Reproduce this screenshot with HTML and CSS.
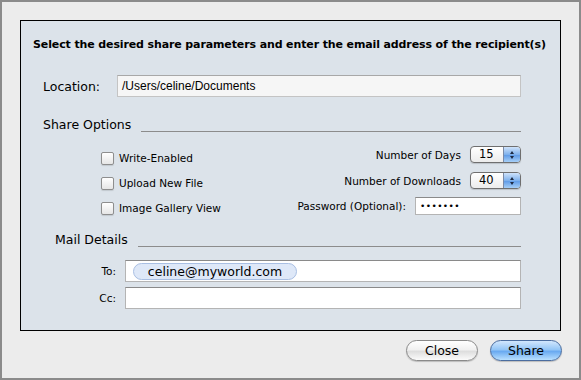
FILE: index.html
```html
<!DOCTYPE html>
<html lang="en">
  <head>
    <meta charset="UTF-8" />
    <title>Share</title>
    <link rel="stylesheet" href="styles.css">
  </head>
  <body>
    <div class="window">
      <div class="panel">
        <h1 class="title">Select the desired share parameters and enter the email address of the recipient(s)</h1>

        <div class="location-row">
          <label class="location-label" for="location">Location:</label>
          <div class="field field-readonly" id="location">/Users/celine/Documents</div>
        </div>

        <div class="section-head">
          <span>Share Options</span>
          <span class="rule"></span>
        </div>

        <div class="options">
          <div class="checks">
            <label class="check"><span class="box"></span>Write-Enabled</label>
            <label class="check"><span class="box"></span>Upload New File</label>
            <label class="check"><span class="box"></span>Image Gallery View</label>
          </div>
          <div class="settings">
            <div class="setting">
              <span>Number of Days</span>
              <div class="stepper">
                <span class="stepper-value">15</span>
                <span class="stepper-arrows"><i class="up"></i><i class="down"></i></span>
              </div>
            </div>
            <div class="setting">
              <span>Number of Downloads</span>
              <div class="stepper">
                <span class="stepper-value">40</span>
                <span class="stepper-arrows"><i class="up"></i><i class="down"></i></span>
              </div>
            </div>
            <div class="setting setting-password">
              <span>Password (Optional):</span>
              <div class="field password">&bull;&bull;&bull;&bull;&bull;&bull;&bull;</div>
            </div>
          </div>
        </div>

        <div class="section-head mail-head">
          <span>Mail Details</span>
          <span class="rule"></span>
        </div>

        <div class="mail-row">
          <label class="mail-label">To:</label>
          <div class="field mail-field">
            <span class="token">celine@myworld.com</span>
          </div>
        </div>
        <div class="mail-row cc-row">
          <label class="mail-label">Cc:</label>
          <div class="field mail-field"></div>
        </div>
      </div>

      <div class="buttons">
        <button class="btn">Close</button>
        <button class="btn btn-default">Share</button>
      </div>
    </div>
  </body>
</html>
```

FILE: styles.css
```css
body {
  margin: 0;
  font-family: "DejaVu Sans", sans-serif;
  color: #000;
}
.window {
  width: 581px;
  height: 380px;
  box-sizing: border-box;
  border: 2px solid #8b8b8b;
  background-color: #ececec;
  padding: 18px 17px 0 18px;
}
.panel {
  width: 541px;
  height: 311px;
  box-sizing: border-box;
  border: 1px solid #000;
  background-color: #dce3ea;
  padding: 0 39px 0 22px;
}
.title {
  margin: 16px 0 0 -10px;
  font-size: 11px;
  line-height: 16px;
  font-weight: bold;
  white-space: nowrap;
  letter-spacing: -0.12px;
}
.location-row {
  display: flex;
  align-items: center;
  margin-top: 22px;
}
.location-label {
  width: 74px;
  font-size: 12.5px;
}
.field {
  flex: 1;
  height: 22px;
  box-sizing: border-box;
  background-color: #fff;
  border: 1px solid #b4b4b4;
  border-top-color: #8a8a8a;
}
.field-readonly {
  background-color: #f6f6f6;
  border-color: #c4c4c4;
  border-top-color: #a8a8a8;
  font-family: "Liberation Sans", sans-serif;
  font-size: 12px;
  line-height: 20px;
  padding-left: 4px;
}
.section-head {
  display: flex;
  align-items: flex-end;
  gap: 10px;
  margin-top: 20px;
  font-size: 12.5px;
  line-height: 16px;

  .rule {
    flex: 1;
    border-bottom: 1px solid #8c8c8c;
    margin-bottom: 1px;
  }
}
.options {
  display: flex;
  justify-content: space-between;
  font-size: 10.5px;
}
.checks {
  display: flex;
  flex-direction: column;
  gap: 9px;
  padding: 17px 0 0 58px;
}
.check {
  display: flex;
  align-items: center;
  gap: 5px;
  height: 16px;
}
.box {
  width: 11px;
  height: 11px;
  border: 1px solid #8e8e8e;
  border-radius: 2px;
  background: linear-gradient(#ffffff, #e6e6e6);
  box-shadow: 0 1px 1px rgba(0, 0, 0, 0.12);
}
.settings {
  display: flex;
  flex-direction: column;
  align-items: flex-end;
  gap: 9px;
  padding-top: 13px;
}
.setting {
  display: flex;
  align-items: center;
  gap: 9px;
  height: 17px;
}
.setting-password {
  height: 18px;
  margin-top: -1px;
}
.stepper {
  display: flex;
  width: 51px;
  height: 17px;
  box-sizing: border-box;
  border: 1px solid #6f6f6f;
  border-radius: 4px;
  overflow: hidden;
  background: linear-gradient(#ffffff, #ececec);
  box-shadow: 0 1px 1px rgba(0, 0, 0, 0.15);
}
.stepper-value {
  flex: 1;
  padding-left: 8px;
  font-size: 11.5px;
  line-height: 15px;
}
.stepper-arrows {
  display: flex;
  flex-direction: column;
  align-items: center;
  justify-content: center;
  gap: 2px;
  width: 16px;
  border-left: 1px solid #7b8aa6;
  background: linear-gradient(#cfe3fb, #7fb1ec 50%, #5b98e6 51%, #a6cff7);

  i {
    display: block;
    width: 0;
    height: 0;
    border-left: 2.5px solid transparent;
    border-right: 2.5px solid transparent;
  }
  .up {
    border-bottom: 3px solid #1c2a44;
  }
  .down {
    border-top: 3px solid #1c2a44;
  }
}
.password {
  flex: none;
  width: 106px;
  height: 18px;
  font-family: "DejaVu Sans", sans-serif;
  font-size: 9px;
  line-height: 16px;
  padding-left: 4px;
  letter-spacing: 0.4px;
}
.mail-head {
  margin-top: 16px;
  padding-left: 12px;
}
.mail-row {
  display: flex;
  align-items: center;
  margin-top: 12px;
}
.cc-row {
  margin-top: 5px;
}
.mail-label {
  width: 73px;
  padding-right: 9px;
  text-align: right;
  font-size: 10.5px;
}
.mail-field {
  display: flex;
  align-items: center;
  padding-left: 7px;
}
.token {
  display: inline-block;
  width: 164px;
  height: 17px;
  box-sizing: border-box;
  border: 1px solid #a9bfe3;
  border-radius: 9px;
  background-color: #dee8f8;
  text-align: center;
  font-size: 12.5px;
  line-height: 15px;
}
.buttons {
  display: flex;
  justify-content: flex-end;
  gap: 12px;
  margin-top: 9px;
}
.btn {
  width: 72px;
  height: 21px;
  border: 1px solid #8a8a8a;
  border-radius: 11px;
  background: linear-gradient(#ffffff, #f1f1f1 45%, #dedede 55%, #fbfbfb);
  box-shadow: 0 1px 1px rgba(0, 0, 0, 0.2);
  font-family: "DejaVu Sans", sans-serif;
  font-size: 12.5px;
  color: #000;
  padding: 0;
}
.btn-default {
  border-color: #4b6d9f;
  background: linear-gradient(#d2e7fd, #94c6f6 45%, #6aaaf1 55%, #b9e0ff);
}
```
